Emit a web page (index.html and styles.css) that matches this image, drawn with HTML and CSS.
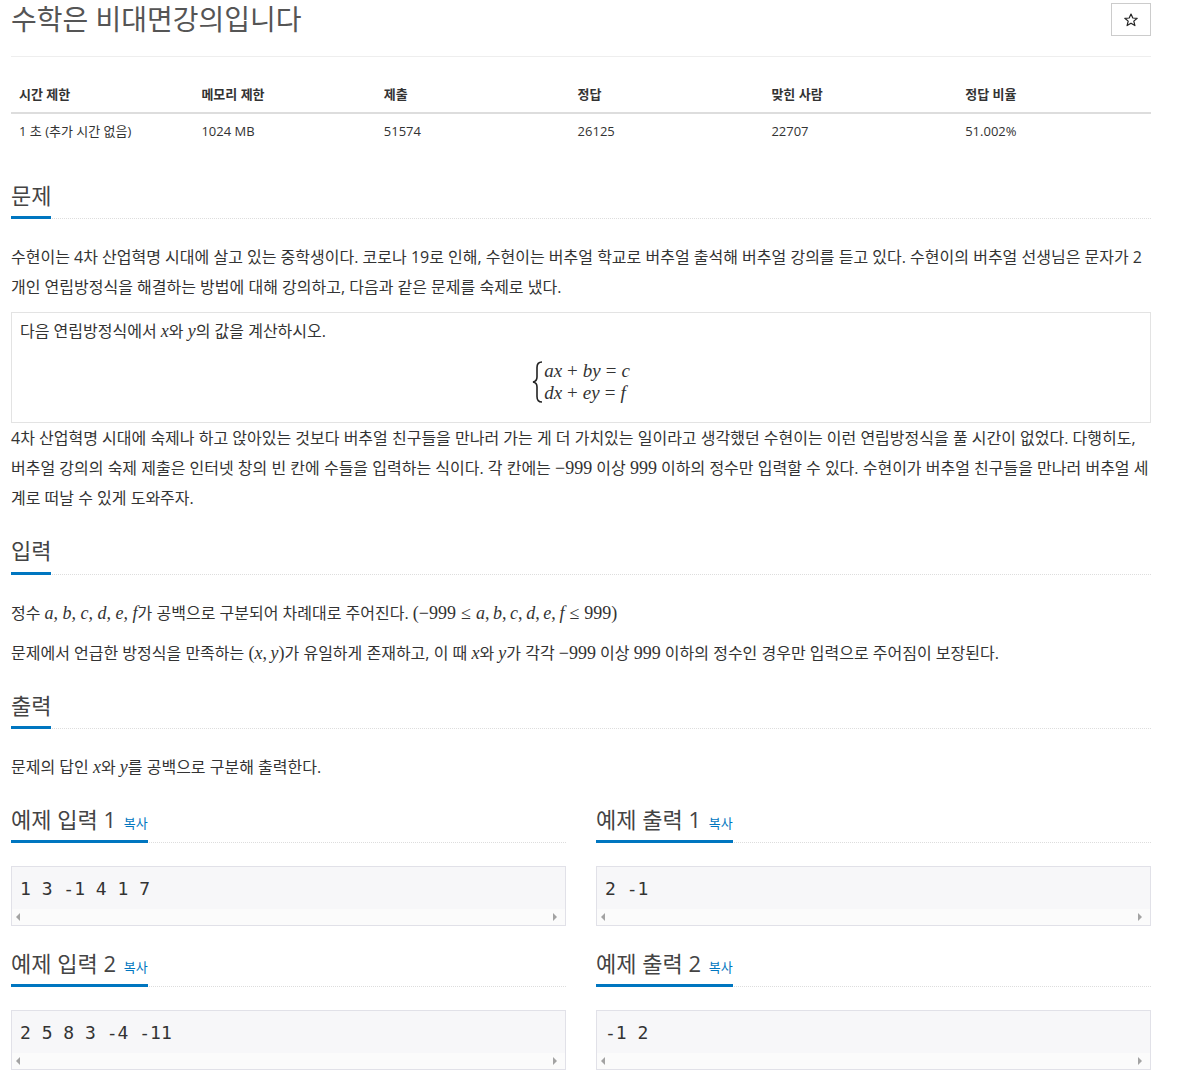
FILE: index.html
```html
<!DOCTYPE html>
<html lang="ko">
<head>
    <meta charset="UTF-8" />
    <title>수학은 비대면강의입니다</title>
    <link rel="stylesheet" href="styles.css">
</head>
<body>
    <div class="container">
        <div class="page-header">
            <h1>수학은 비대면강의입니다</h1>
            <button class="star-btn" title="즐겨찾기">
                <svg width="14" height="14" viewBox="0 0 14 14">
                    <polygon points="7,1 8.8,5 13.2,5.3 9.8,8.1 10.9,12.6 7,10.2 3.1,12.6 4.2,8.1 0.8,5.3 5.2,5" fill="none" stroke="#222" stroke-width="1.2" stroke-linejoin="round"/>
                </svg>
            </button>
        </div>

        <table class="info-table">
            <thead>
                <tr>
                    <th class="w16">시간 제한</th>
                    <th class="w16">메모리 제한</th>
                    <th>제출</th>
                    <th>정답</th>
                    <th>맞힌 사람</th>
                    <th>정답 비율</th>
                </tr>
            </thead>
            <tbody>
                <tr>
                    <td>1 초 (추가 시간 없음)</td>
                    <td>1024 MB</td>
                    <td>51574</td>
                    <td>26125</td>
                    <td>22707</td>
                    <td>51.002%</td>
                </tr>
            </tbody>
        </table>

        <section class="problem-section">
            <div class="headline"><h2>문제</h2></div>
            <p>수현이는 4차 산업혁명 시대에 살고 있는 중학생이다. 코로나 19로 인해, 수현이는 버추얼 학교로 버추얼 출석해 버추얼 강의를 듣고 있다. 수현이의 버추얼 선생님은 문자가 2개인 연립방정식을 해결하는 방법에 대해 강의하고, 다음과 같은 문제를 숙제로 냈다.</p>
            <div class="note">
                <p>다음 연립방정식에서 <span class="m">x</span>와 <span class="m">y</span>의 값을 계산하시오.</p>
                <div class="equation">
                    <svg class="brace" width="11" height="42" viewBox="0 0 11 42">
                        <path d="M10,1 C6.5,1 5,2.5 5,6.5 L5,16 C5,19 3.8,20.5 1,21 C3.8,21.5 5,23 5,26 L5,35.5 C5,39.5 6.5,41 10,41" fill="none" stroke="#222" stroke-width="1.6"/>
                    </svg>
                    <div class="eq-lines">
                        <div><span class="m">ax</span><span class="op">+</span><span class="m">by</span><span class="op">=</span><span class="m">c</span></div>
                        <div><span class="m">dx</span><span class="op">+</span><span class="m">ey</span><span class="op">=</span><span class="m">f</span></div>
                    </div>
                </div>
            </div>
            <p>4차 산업혁명 시대에 숙제나 하고 앉아있는 것보다 버추얼 친구들을 만나러 가는 게 더 가치있는 일이라고 생각했던 수현이는 이런 연립방정식을 풀 시간이 없었다. 다행히도, 버추얼 강의의 숙제 제출은 인터넷 창의 빈 칸에 수들을 입력하는 식이다. 각 칸에는 <span class="n">&minus;999</span> 이상 <span class="n">999</span> 이하의 정수만 입력할 수 있다. 수현이가 버추얼 친구들을 만나러 버추얼 세계로 떠날 수 있게 도와주자.</p>
        </section>

        <section class="problem-section">
            <div class="headline"><h2>입력</h2></div>
            <p>정수 <span class="m">a, b, c, d, e, f</span>가 공백으로 구분되어 차례대로 주어진다. <span class="n">(&minus;999<span class="le">&le;</span><i>a</i>,&thinsp;<i>b</i>,&thinsp;<i>c</i>,&thinsp;<i>d</i>,&thinsp;<i>e</i>,&thinsp;<i>f</i><span class="le">&le;</span>999)</span></p>
            <p>문제에서 언급한 방정식을 만족하는 <span class="n">(<i>x</i>,&thinsp;<i>y</i>)</span>가 유일하게 존재하고, 이 때 <span class="m">x</span>와 <span class="m">y</span>가 각각 <span class="n">&minus;999</span> 이상 <span class="n">999</span> 이하의 정수인 경우만 입력으로 주어짐이 보장된다.</p>
        </section>

        <section class="problem-section">
            <div class="headline"><h2>출력</h2></div>
            <p>문제의 답인 <span class="m">x</span>와 <span class="m">y</span>를 공백으로 구분해 출력한다.</p>
        </section>

        <div class="samples">
            <div class="sample">
                <div class="headline"><h2>예제 입력 1 <a class="copy" href="#">복사</a></h2></div>
                <div class="sample-box">
                    <pre>1 3 -1 4 1 7</pre>
                    <div class="scrollbar"><span class="arrow-left"></span><span class="arrow-right"></span></div>
                </div>
            </div>
            <div class="sample">
                <div class="headline"><h2>예제 출력 1 <a class="copy" href="#">복사</a></h2></div>
                <div class="sample-box">
                    <pre>2 -1</pre>
                    <div class="scrollbar"><span class="arrow-left"></span><span class="arrow-right"></span></div>
                </div>
            </div>
            <div class="sample">
                <div class="headline"><h2>예제 입력 2 <a class="copy" href="#">복사</a></h2></div>
                <div class="sample-box">
                    <pre>2 5 8 3 -4 -11</pre>
                    <div class="scrollbar"><span class="arrow-left"></span><span class="arrow-right"></span></div>
                </div>
            </div>
            <div class="sample">
                <div class="headline"><h2>예제 출력 2 <a class="copy" href="#">복사</a></h2></div>
                <div class="sample-box">
                    <pre>-1 2</pre>
                    <div class="scrollbar"><span class="arrow-left"></span><span class="arrow-right"></span></div>
                </div>
            </div>
        </div>
    </div>
</body>
</html>
```

FILE: styles.css
```css
* {
    box-sizing: border-box;
}

body {
    margin: 0;
    font-family: "Open Sans", "Noto Sans CJK KR", sans-serif;
    font-size: 16px;
    color: #333;
    background-color: #fff;
}

.container {
    width: 1140px;
    margin-left: 11px;
    padding-bottom: 40px;
}

.page-header {
    display: flex;
    justify-content: space-between;
    align-items: flex-start;
    padding-bottom: 20px;
    border-bottom: 1px solid #eee;
}

.page-header h1 {
    margin: 4px 0 0 0;
    font-size: 28px;
    font-weight: 400;
    line-height: 1.1;
    color: #555;
}

.star-btn {
    margin-top: 3px;
    width: 40px;
    height: 33px;
    border: 1px solid #ccc;
    background-color: #fff;
    display: flex;
    align-items: center;
    justify-content: center;
    padding: 0;
    cursor: pointer;
}

.info-table {
    width: 100%;
    table-layout: fixed;
    border-collapse: collapse;
    margin-top: 20px;
    margin-bottom: 35px;
    font-size: 13px;
}

.info-table th,
.info-table td {
    text-align: left;
    padding: 8px;
    line-height: 18.6px;
}

.info-table th {
    width: 17%;
    font-weight: 700;
    border-bottom: 2px solid #ddd;
}

.info-table th.w16 {
    width: 16%;
}

.headline {
    margin-top: 25px;
    margin-bottom: 23px;
    border-bottom: 1px dotted #ddd;
}

.headline h2 {
    display: inline-block;
    margin: 0 0 -1px 0;
    padding-bottom: 9px;
    font-size: 22px;
    font-weight: 400;
    line-height: 1.1;
    color: #444;
    border-bottom: 3px solid #0076c0;
}

.copy {
    margin-left: 2px;
    font-size: 13px;
    color: #0076c0;
    text-decoration: none;
}

p {
    margin: 0 0 10px 0;
    line-height: 30px;
}

.m {
    font-family: "Liberation Serif", serif;
    font-style: italic;
    font-size: 18px;
}

.n {
    font-family: "Liberation Serif", serif;
    font-size: 18px;
}

.n i {
    font-style: italic;
}

.le {
    margin: 0 5px;
}

.note {
    border: 1px solid #e3e3e3;
    padding: 5px 8px;
}

.note p {
    margin: 0;
    line-height: 26px;
}

.equation {
    display: flex;
    justify-content: center;
    align-items: center;
    margin: 16px 0 13px 0;
}

.brace {
    margin-right: 1px;
}

.eq-lines {
    line-height: 21px;
}

.eq-lines .m {
    font-size: 19px;
}

.op {
    font-family: "Liberation Serif", serif;
    font-size: 19px;
    margin: 0 5px;
}

.samples {
    display: grid;
    grid-template-columns: 1fr 1fr;
    column-gap: 30px;
}

.sample .headline {
    margin-top: 15px;
}

.sample-box {
    border: 1px solid #e1e1e8;
    background-color: #f7f7f9;
    margin-bottom: 10px;
}

.sample-box pre {
    margin: 0;
    padding: 9px 8px 8px 8px;
    font-family: "DejaVu Sans Mono", monospace;
    font-size: 18px;
    line-height: 25px;
    color: #333;
}

.scrollbar {
    height: 16px;
    background-color: #fbfbfb;
    display: flex;
    justify-content: space-between;
    align-items: center;
    padding: 0 8px 0 4px;
}

.arrow-left {
    width: 0;
    height: 0;
    border-top: 4px solid transparent;
    border-bottom: 4px solid transparent;
    border-right: 4px solid #a3a3a3;
}

.arrow-right {
    width: 0;
    height: 0;
    border-top: 4px solid transparent;
    border-bottom: 4px solid transparent;
    border-left: 4px solid #a3a3a3;
}
```
